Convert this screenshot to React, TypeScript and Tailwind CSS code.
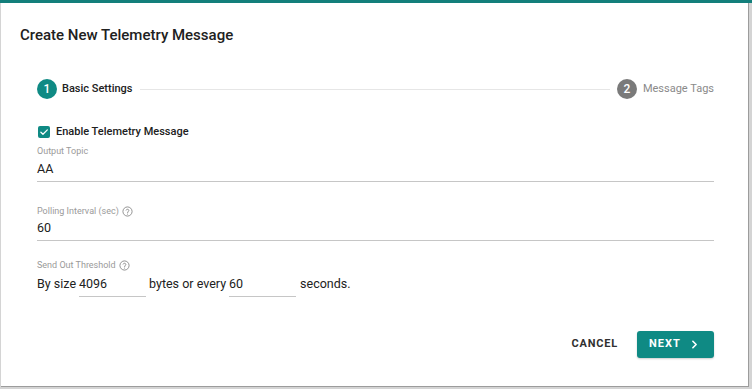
import { ChevronRight } from 'lucide-react'

const TEAL = 'bg-[#0f8a84]'

function HelpIcon() {
  return (
    <svg width="11" height="11" viewBox="0 0 24 24" fill="none" className="ml-[3px] text-[#8a8a8a]">
      <circle cx="12" cy="12" r="10" stroke="currentColor" strokeWidth="2" />
      <path d="M9.1 9a3 3 0 0 1 5.8 1c0 2-3 2.6-3 4.4" stroke="currentColor" strokeWidth="2" strokeLinecap="round" />
      <circle cx="12" cy="17.6" r="1.2" fill="currentColor" />
    </svg>
  )
}

function FieldLabel({ children, help }: { children: string; help?: boolean }) {
  return (
    <div className="flex items-center h-[12px] text-[9px] leading-[12px] text-[#9a9a9a]">
      {children}
      {help && <HelpIcon />}
    </div>
  )
}

function TextField({ value, className }: { value: string; className?: string }) {
  return (
    <div className={'pb-[4px] border-b border-[#c6c6c6] text-[12.5px] leading-[16px] text-[#212121] ' + (className ?? '')}>
      {value}
    </div>
  )
}

export default function App() {
  return (
    <div className="w-[752px] h-[389px] flex flex-col bg-[#d4d4d4] font-['Roboto','Liberation_Sans',sans-serif] overflow-hidden">
      <div className="h-[3px] bg-[#137f7b] shrink-0" />
      <div className="flex-1 flex pl-px pr-[3px] pb-[2px]">
        <div className="flex-1 flex flex-col bg-white border-r border-b border-[#9c9c9c]">
          {/* title */}
          <div className="pt-[22px] pl-[19px] text-[15px] leading-[20px] font-medium text-[#212121]">
            Create New Telemetry Message
          </div>

          <div className="pl-[36px] pr-[34px]">
            {/* stepper */}
            <div className="mt-[34px] h-[20px] flex items-center">
              <div className={`w-[20px] h-[20px] rounded-full ${TEAL} text-white text-[12px] font-medium flex items-center justify-center`}>1</div>
              <span className="ml-[5px] text-[11px] font-medium text-[#212121]">Basic Settings</span>
              <div className="flex-1 mx-[7px] h-px bg-[#e6e6e6]" />
              <div className="w-[20px] h-[20px] rounded-full bg-[#7a7a7a] text-white text-[12px] font-medium flex items-center justify-center">2</div>
              <span className="ml-[6px] text-[11px] text-[#8a8a8a]">Message Tags</span>
            </div>

            {/* checkbox */}
            <div className="mt-[25px] h-[16px] flex items-center">
              <div className={`w-[12px] h-[12px] ml-px rounded-[2px] ${TEAL} flex items-center justify-center`}>
                <svg width="10" height="10" viewBox="0 0 24 24" fill="none">
                  <path d="M4.5 12.5l5 5L20 7" stroke="white" strokeWidth="3" strokeLinecap="round" strokeLinejoin="round" />
                </svg>
              </div>
              <span className="ml-[6px] text-[11px] font-medium text-[#212121]">Enable Telemetry Message</span>
            </div>

            {/* output topic */}
            <div className="mt-[5px]">
              <FieldLabel>Output Topic</FieldLabel>
              <TextField value="AA" className="pt-[4px]" />
            </div>

            {/* polling interval */}
            <div className="mt-[23px]">
              <FieldLabel help>Polling Interval (sec)</FieldLabel>
              <TextField value="60" className="pt-[3px]" />
            </div>

            {/* threshold */}
            <div className="mt-[18px]">
              <FieldLabel help>Send Out Threshold</FieldLabel>
              <div className="mt-[5px] flex items-start text-[12.5px] leading-[16px] text-[#212121]">
                <span>By size</span>
                <TextField value="4096" className="ml-[3px] w-[67px]" />
                <span className="ml-[3px]">bytes or every</span>
                <TextField value="60" className="ml-[3px] w-[67px]" />
                <span className="ml-[4px]">seconds.</span>
              </div>
            </div>
          </div>

          {/* footer */}
          <div className="mt-auto pb-[28px] pr-[34px] flex justify-end items-center gap-[19px]">
            <button className="text-[11px] font-bold tracking-[0.8px] text-[#303030]">CANCEL</button>
            <button className={`w-[77px] h-[27px] rounded-[3px] ${TEAL} shadow-[0_1px_2px_rgba(0,0,0,0.2)] text-white text-[11px] font-bold tracking-[1px] flex items-center pl-[12px]`}>
              NEXT
              <ChevronRight size={13} strokeWidth={3} className="ml-[7px]" />
            </button>
          </div>
        </div>
      </div>
    </div>
  )
}
